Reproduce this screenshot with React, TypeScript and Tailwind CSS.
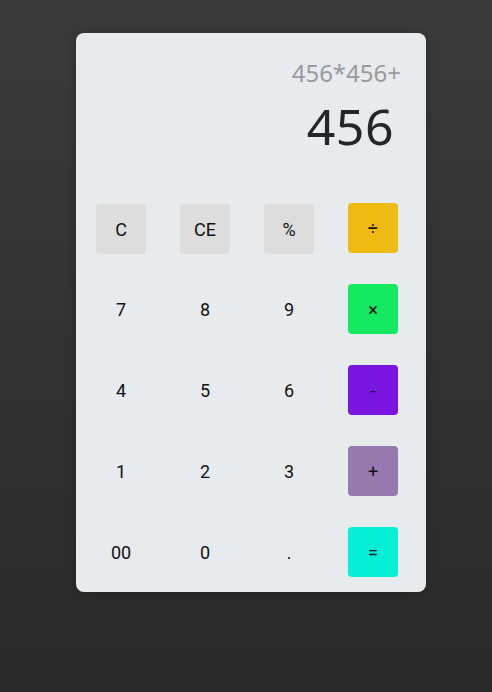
import React, { useState } from 'react';

type Key = { label: string; kind: 'fn' | 'num' | 'op'; color?: string };

const keys: Key[] = [
  { label: 'C', kind: 'fn' },
  { label: 'CE', kind: 'fn' },
  { label: '%', kind: 'fn' },
  { label: '÷', kind: 'op', color: 'bg-[#efbb13]' },
  { label: '7', kind: 'num' },
  { label: '8', kind: 'num' },
  { label: '9', kind: 'num' },
  { label: '×', kind: 'op', color: 'bg-[#15e961]' },
  { label: '4', kind: 'num' },
  { label: '5', kind: 'num' },
  { label: '6', kind: 'num' },
  { label: '-', kind: 'op', color: 'bg-[#7a15e0]' },
  { label: '1', kind: 'num' },
  { label: '2', kind: 'num' },
  { label: '3', kind: 'num' },
  { label: '+', kind: 'op', color: 'bg-[#9679ae]' },
  { label: '00', kind: 'num' },
  { label: '0', kind: 'num' },
  { label: '.', kind: 'num' },
  { label: '=', kind: 'op', color: 'bg-[#07eed6]' },
];

const App: React.FC = () => {
  const [expr] = useState('456*456+');
  const [value] = useState('456');

  return (
    <div className="min-h-screen w-full bg-gradient-to-b from-[#3b3b3b] to-[#2a2a2a] pt-[33px]">
      <div className="ml-[76px] w-[350px] rounded-lg bg-[#e8ebee] pb-[15px] shadow-[0_0_12px_rgba(0,0,0,0.25)]">
        {/* display */}
        <div className="flex flex-col items-end pt-[28px] font-['Noto_Sans',sans-serif]">
          <div className="pr-[25px] text-[24px] leading-none text-[#9a9a9a]">{expr}</div>
          <div className="mt-[16px] pr-[32px] text-[50px] leading-none tracking-[0.5px] text-[#23272b]">{value}</div>
        </div>

        {/* keypad */}
        <div className="mt-[52px] grid grid-cols-[repeat(4,50px)] gap-x-[34px] gap-y-[31px] pl-[20px] font-['Roboto',sans-serif] text-[18px] text-[#111]">
          {keys.map((k) => (
            <button
              key={k.label}
              className={
                k.kind === 'fn'
                  ? 'flex h-[50px] w-[50px] translate-y-px items-center justify-center rounded-[4px] bg-[#dddddd]'
                  : k.kind === 'op'
                  ? `flex h-[50px] w-[50px] items-center justify-center rounded-[4px] ${k.color}`
                  : 'flex h-[50px] w-[50px] items-center justify-center'
              }
            >
              {k.label}
            </button>
          ))}
        </div>
      </div>
    </div>
  );
};

export default App;
